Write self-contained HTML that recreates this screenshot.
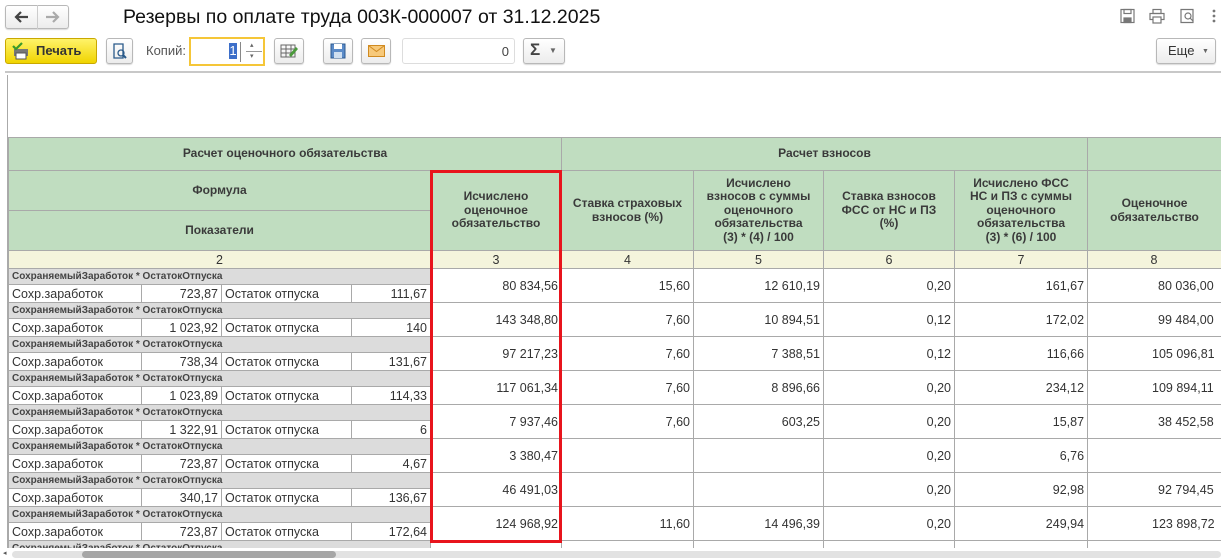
<!DOCTYPE html>
<html><head><meta charset="utf-8">
<style>
*{box-sizing:border-box;margin:0;padding:0}
body{width:1221px;height:558px;overflow:hidden;background:#fff;font-family:"Liberation Sans",Arial,sans-serif;position:relative;color:#333}
.abs{position:absolute}
.btn{position:absolute;border:1px solid #b8b8b8;border-radius:3px;background:linear-gradient(#fff,#ececec);box-shadow:0 1px 1px rgba(0,0,0,.15)}
.wrap{position:absolute;left:8px;top:137px;width:1213px;height:411px;overflow:hidden}
table{width:1219px;border-collapse:collapse;table-layout:fixed;font-family:"Liberation Sans Narrow","Liberation Sans",sans-serif;font-size:12.5px;color:#333}
td{border:1px solid #a9a9a9;overflow:hidden;white-space:nowrap;padding:0 3px;line-height:14px}
.h{background:#c0ddc0;text-align:center;white-space:normal;font-family:"Liberation Sans",sans-serif;font-size:12px;font-weight:bold;color:#3a3a3a;padding:0 4px;line-height:13.5px}
.n{background:#f4f4dc;text-align:center;height:18px}
.g{background:#dcdcdc;font-size:10px;font-weight:bold;height:16px;color:#444;font-family:"Liberation Sans",sans-serif}
.w{height:18px}
.r{text-align:right}
</style></head><body>
<!-- top bar -->
<div class="btn" style="left:5px;top:5px;width:64px;height:24px"></div>
<div class="abs" style="left:37px;top:5px;width:1px;height:24px;background:#ccc"></div>
<svg class="abs" style="left:13px;top:10px" width="16" height="14" viewBox="0 0 16 14"><path d="M15 7H4M8 2L3 7l5 5" stroke="#444" stroke-width="2.2" fill="none"/></svg>
<svg class="abs" style="left:45px;top:10px" width="16" height="14" viewBox="0 0 16 14"><path d="M1 7h11M8 2l5 5-5 5" stroke="#aaa" stroke-width="2.2" fill="none"/></svg>
<div class="abs" style="left:123px;top:6px;font-size:19.5px;color:#111">Резервы по оплате труда 003К-000007 от 31.12.2025</div>
<svg class="abs" style="left:1118px;top:8px" width="100" height="18" viewBox="0 0 100 18" fill="none" stroke="#777" stroke-width="1.2">
<rect x="3" y="1.5" width="13" height="13"/><rect x="6" y="1.5" width="7" height="4"/><rect x="6" y="10" width="7" height="4.5" fill="#777"/>
<rect x="35" y="1.5" width="8" height="4"/><rect x="32" y="5.5" width="14" height="6"/><rect x="35" y="9" width="8" height="6" fill="#fff"/>
<path d="M63 1.5h12v13h-12z"/><circle cx="70" cy="8" r="3"/><path d="M72 10l3 3"/>
<circle cx="96" cy="3" r=".8" fill="#777"/><circle cx="96" cy="8" r=".8" fill="#777"/><circle cx="96" cy="13" r=".8" fill="#777"/>
</svg>
<!-- toolbar -->
<div class="abs" style="left:5px;top:38px;width:92px;height:26px;border:1px solid #c9a800;border-radius:3px;background:linear-gradient(#fff36a,#f0d400)"></div>
<svg class="abs" style="left:11px;top:42px" width="20" height="18" viewBox="0 0 20 18"><rect x="3" y="7" width="14" height="7" fill="#777"/><rect x="5" y="11" width="10" height="6" fill="#fff" stroke="#555"/><path d="M2 4l3 3 6-6" stroke="#3a9a2a" stroke-width="2.2" fill="none"/></svg>
<div class="abs" style="left:36px;top:43px;font-size:13px;font-weight:bold;color:#333">Печать</div>
<div class="btn" style="left:106px;top:38px;width:27px;height:26px"></div>
<svg class="abs" style="left:112px;top:43px" width="16" height="16" viewBox="0 0 16 16" fill="none" stroke="#2a5a8a" stroke-width="1.3"><path d="M2 1h9v14H2z"/><circle cx="9" cy="10" r="3"/><path d="M11 12l3 3" stroke-width="2"/></svg>
<div class="abs" style="left:146px;top:43px;font-size:13px;color:#555">Копий:</div>
<div class="abs" style="left:189px;top:37px;width:76px;height:29px;border:2px solid #f5c638;background:#fff"></div>
<div class="abs" style="left:229px;top:43px;width:8px;height:16px;background:#3d6fc9;color:#fff;font-size:13px;text-align:center;line-height:16px">1</div>
<div class="abs" style="left:240px;top:42px;width:1px;height:20px;background:#888"></div>
<div class="abs" style="left:246px;top:51px;width:16px;height:1px;background:#999"></div>
<div class="abs" style="left:250px;top:41px;font-size:7px;color:#666">▴</div><div class="abs" style="left:250px;top:52px;font-size:7px;color:#666">▾</div>
<div class="btn" style="left:274px;top:38px;width:30px;height:26px"></div>
<svg class="abs" style="left:280px;top:44px" width="18" height="14" viewBox="0 0 18 14"><path d="M1 1h14v12H1zM1 5h14M1 9h14M6 1v12M11 1v12" stroke="#666" fill="none"/><path d="M9 11l7-8 2 2-7 8z" fill="#4a9a3a"/></svg>
<div class="btn" style="left:323px;top:38px;width:30px;height:26px"></div>
<svg class="abs" style="left:330px;top:43px" width="16" height="16" viewBox="0 0 16 16"><rect x="1" y="1" width="14" height="14" fill="#5b8bc8" stroke="#2d5a90"/><rect x="4" y="1" width="8" height="5" fill="#fff"/><rect x="4" y="9" width="8" height="6" fill="#cfdff0"/></svg>
<div class="btn" style="left:361px;top:38px;width:30px;height:26px"></div>
<svg class="abs" style="left:368px;top:45px" width="17" height="12" viewBox="0 0 17 12"><rect x=".5" y=".5" width="16" height="11" fill="#f7c97a" stroke="#d08a20"/><path d="M.5 .5l8 6 8-6" stroke="#d08a20" fill="none"/></svg>
<div class="abs" style="left:402px;top:38px;width:113px;height:26px;border:1px solid #ddd;border-radius:3px;background:#fff;font-size:13px;text-align:right;padding:5px 5px;color:#444">0</div>
<div class="btn" style="left:523px;top:38px;width:42px;height:26px"></div>
<div class="abs" style="left:530px;top:40px;font-size:17px;font-weight:bold;color:#444">Σ</div>
<div class="abs" style="left:549px;top:46px;font-size:8px;color:#666">▼</div>
<div class="btn" style="left:1156px;top:38px;width:60px;height:26px"></div>
<div class="abs" style="left:1168px;top:43px;font-size:13px;color:#333">Еще</div>
<div class="abs" style="left:1202px;top:48px;font-size:7px;color:#666">▼</div>
<div class="abs" style="left:5px;top:71px;width:1216px;height:2px;background:#c8c8c8"></div>
<div class="abs" style="left:7px;top:75px;width:1px;height:475px;background:#aaa"></div>

<div class="wrap">
<table>
<colgroup><col style="width:133px"><col style="width:80px"><col style="width:130px"><col style="width:79px"><col style="width:131px"><col style="width:132px"><col style="width:130px"><col style="width:131px"><col style="width:133px"><col style="width:140px"></colgroup>
<tr style="height:33px"><td class="h" colspan="5">Расчет оценочного обязательства</td><td class="h" colspan="4">Расчет взносов</td><td class="h"></td></tr>
<tr style="height:40px"><td class="h" colspan="4">Формула</td><td class="h" rowspan="2">Исчислено оценочное обязательство</td><td class="h" rowspan="2" style="padding:0 2px">Ставка страховых взносов (%)</td><td class="h" rowspan="2" style="padding:0 8px">Исчислено взносов с суммы оценочного обязательства<br>(3) * (4) / 100</td><td class="h" rowspan="2" style="padding:0 12px">Ставка взносов ФСС от НС и ПЗ (%)</td><td class="h" rowspan="2" style="padding:0 8px">Исчислено ФСС НС и ПЗ с суммы оценочного обязательства<br>(3) * (6) / 100</td><td class="h" rowspan="2" style="padding-right:10px">Оценочное обязательство</td></tr>
<tr style="height:40px"><td class="h" colspan="4">Показатели</td></tr>
<tr><td class="n" colspan="4">2</td><td class="n">3</td><td class="n">4</td><td class="n">5</td><td class="n">6</td><td class="n">7</td><td class="n" style="padding-right:10px">8</td></tr>

<tr><td class="g" colspan="4">СохраняемыйЗаработок * ОстатокОтпуска</td><td class="r" rowspan="2">80 834,56</td><td class="r" rowspan="2">15,60</td><td class="r" rowspan="2">12 610,19</td><td class="r" rowspan="2">0,20</td><td class="r" rowspan="2">161,67</td><td rowspan="2" style="padding-left:70px">80 036,00</td></tr>
<tr class="w"><td>Сохр.заработок</td><td class="r">723,87</td><td>Остаток отпуска</td><td class="r">111,67</td></tr>
<tr><td class="g" colspan="4">СохраняемыйЗаработок * ОстатокОтпуска</td><td class="r" rowspan="2">143 348,80</td><td class="r" rowspan="2">7,60</td><td class="r" rowspan="2">10 894,51</td><td class="r" rowspan="2">0,12</td><td class="r" rowspan="2">172,02</td><td rowspan="2" style="padding-left:70px">99 484,00</td></tr>
<tr class="w"><td>Сохр.заработок</td><td class="r">1 023,92</td><td>Остаток отпуска</td><td class="r">140</td></tr>
<tr><td class="g" colspan="4">СохраняемыйЗаработок * ОстатокОтпуска</td><td class="r" rowspan="2">97 217,23</td><td class="r" rowspan="2">7,60</td><td class="r" rowspan="2">7 388,51</td><td class="r" rowspan="2">0,12</td><td class="r" rowspan="2">116,66</td><td rowspan="2" style="padding-left:64px">105 096,81</td></tr>
<tr class="w"><td>Сохр.заработок</td><td class="r">738,34</td><td>Остаток отпуска</td><td class="r">131,67</td></tr>
<tr><td class="g" colspan="4">СохраняемыйЗаработок * ОстатокОтпуска</td><td class="r" rowspan="2">117 061,34</td><td class="r" rowspan="2">7,60</td><td class="r" rowspan="2">8 896,66</td><td class="r" rowspan="2">0,20</td><td class="r" rowspan="2">234,12</td><td rowspan="2" style="padding-left:64px">109 894,11</td></tr>
<tr class="w"><td>Сохр.заработок</td><td class="r">1 023,89</td><td>Остаток отпуска</td><td class="r">114,33</td></tr>
<tr><td class="g" colspan="4">СохраняемыйЗаработок * ОстатокОтпуска</td><td class="r" rowspan="2">7 937,46</td><td class="r" rowspan="2">7,60</td><td class="r" rowspan="2">603,25</td><td class="r" rowspan="2">0,20</td><td class="r" rowspan="2">15,87</td><td rowspan="2" style="padding-left:70px">38 452,58</td></tr>
<tr class="w"><td>Сохр.заработок</td><td class="r">1 322,91</td><td>Остаток отпуска</td><td class="r">6</td></tr>
<tr><td class="g" colspan="4">СохраняемыйЗаработок * ОстатокОтпуска</td><td class="r" rowspan="2">3 380,47</td><td class="r" rowspan="2"></td><td class="r" rowspan="2"></td><td class="r" rowspan="2">0,20</td><td class="r" rowspan="2">6,76</td><td rowspan="2"></td></tr>
<tr class="w"><td>Сохр.заработок</td><td class="r">723,87</td><td>Остаток отпуска</td><td class="r">4,67</td></tr>
<tr><td class="g" colspan="4">СохраняемыйЗаработок * ОстатокОтпуска</td><td class="r" rowspan="2">46 491,03</td><td class="r" rowspan="2"></td><td class="r" rowspan="2"></td><td class="r" rowspan="2">0,20</td><td class="r" rowspan="2">92,98</td><td rowspan="2" style="padding-left:70px">92 794,45</td></tr>
<tr class="w"><td>Сохр.заработок</td><td class="r">340,17</td><td>Остаток отпуска</td><td class="r">136,67</td></tr>
<tr><td class="g" colspan="4">СохраняемыйЗаработок * ОстатокОтпуска</td><td class="r" rowspan="2">124 968,92</td><td class="r" rowspan="2">11,60</td><td class="r" rowspan="2">14 496,39</td><td class="r" rowspan="2">0,20</td><td class="r" rowspan="2">249,94</td><td rowspan="2" style="padding-left:64px">123 898,72</td></tr>
<tr class="w"><td>Сохр.заработок</td><td class="r">723,87</td><td>Остаток отпуска</td><td class="r">172,64</td></tr>
<tr><td class="g" colspan="4">СохраняемыйЗаработок * ОстатокОтпуска</td><td rowspan="2"></td><td rowspan="2"></td><td rowspan="2"></td><td rowspan="2"></td><td rowspan="2"></td><td rowspan="2"></td></tr>
<tr class="w"><td></td><td></td><td></td><td></td></tr>
</table>
</div>
<div class="abs" style="left:430px;top:170px;width:132px;height:373px;border:3px solid #e8141c"></div>
<!-- scrollbar -->
<div class="abs" style="left:0;top:548px;width:1221px;height:10px;background:#fff"></div>
<div class="abs" style="left:12px;top:551px;width:1209px;height:7px;background:#e2e2e2;border-radius:4px"></div>
<div class="abs" style="left:82px;top:551px;width:254px;height:7px;background:#a6a6a6;border-radius:4px"></div>
<div class="abs" style="left:3px;top:549px;font-size:7px;color:#555">◂</div>
</body></html>
